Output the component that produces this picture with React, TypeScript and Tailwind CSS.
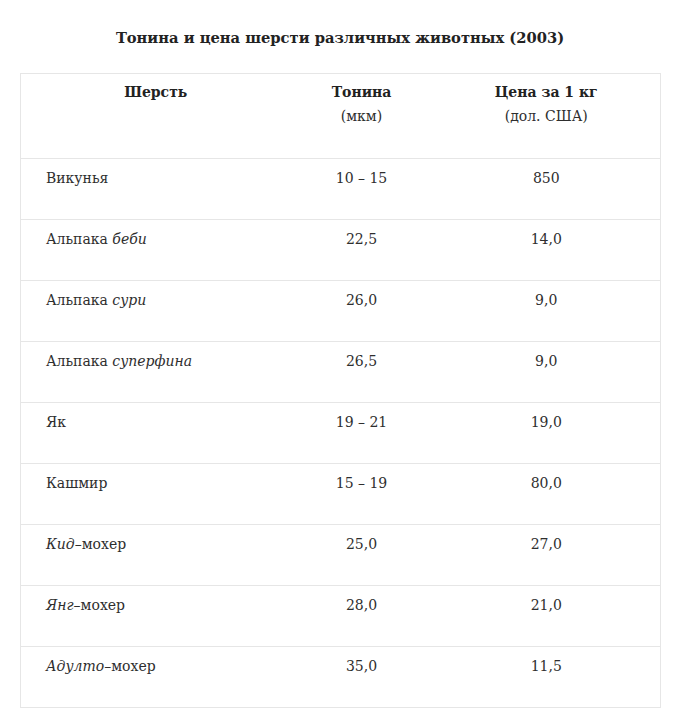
import React from "react";

type Row = { name: React.ReactNode; t: string; p: string };

const rows: Row[] = [
  { name: "Викунья", t: "10 – 15", p: "850" },
  { name: <>Альпака <i>беби</i></>, t: "22,5", p: "14,0" },
  { name: <>Альпака <i>сури</i></>, t: "26,0", p: "9,0" },
  { name: <>Альпака <i>суперфина</i></>, t: "26,5", p: "9,0" },
  { name: "Як", t: "19 – 21", p: "19,0" },
  { name: "Кашмир", t: "15 – 19", p: "80,0" },
  { name: <><i>Кид</i>–мохер</>, t: "25,0", p: "27,0" },
  { name: <><i>Янг</i>–мохер</>, t: "28,0", p: "21,0" },
  { name: <><i>Адулто</i>–мохер</>, t: "35,0", p: "11,5" },
];

export default function App() {
  return (
    <div
      className="w-[680px] h-[725px] bg-white text-[#2e2e2e]"
      style={{ fontFamily: '"DejaVu Serif", "Liberation Serif", serif' }}
    >
      <h2 className="pt-[27px] h-[73px] text-center text-[14.7px] font-bold leading-[22px] text-[#222]">
        Тонина и цена шерсти различных животных (2003)
      </h2>
      <table className="ml-[20px] w-[640px] table-fixed border-collapse border border-[#e6e6e6] text-[14px] leading-[24px]">
        <colgroup>
          <col className="w-[270px]" />
          <col className="w-[142px]" />
          <col className="w-[228px]" />
        </colgroup>
        <thead>
          <tr className="h-[84px] border-b border-[#e6e6e6] align-top">
            <th className="pt-[6px] pb-[30px] font-bold text-[#222]">Шерсть</th>
            <th className="pt-[6px] pb-[30px] text-center">
              <div className="font-bold text-[#222]">Тонина</div>
              <div className="font-normal">(мкм)</div>
            </th>
            <th className="pt-[6px] pb-[30px] text-center">
              <div className="font-bold text-[#222]">Цена за 1 кг</div>
              <div className="font-normal">(дол. США)</div>
            </th>
          </tr>
        </thead>
        <tbody>
          {rows.map((r, i) => (
            <tr key={i} className="h-[61px] border-b border-[#e6e6e6] align-top">
              <td className="pt-[7px] pb-[28px] pl-[25px]">{r.name}</td>
              <td className="pt-[7px] pb-[28px] text-center">{r.t}</td>
              <td className="pt-[7px] pb-[28px] text-center">{r.p}</td>
            </tr>
          ))}
        </tbody>
      </table>
    </div>
  );
}
